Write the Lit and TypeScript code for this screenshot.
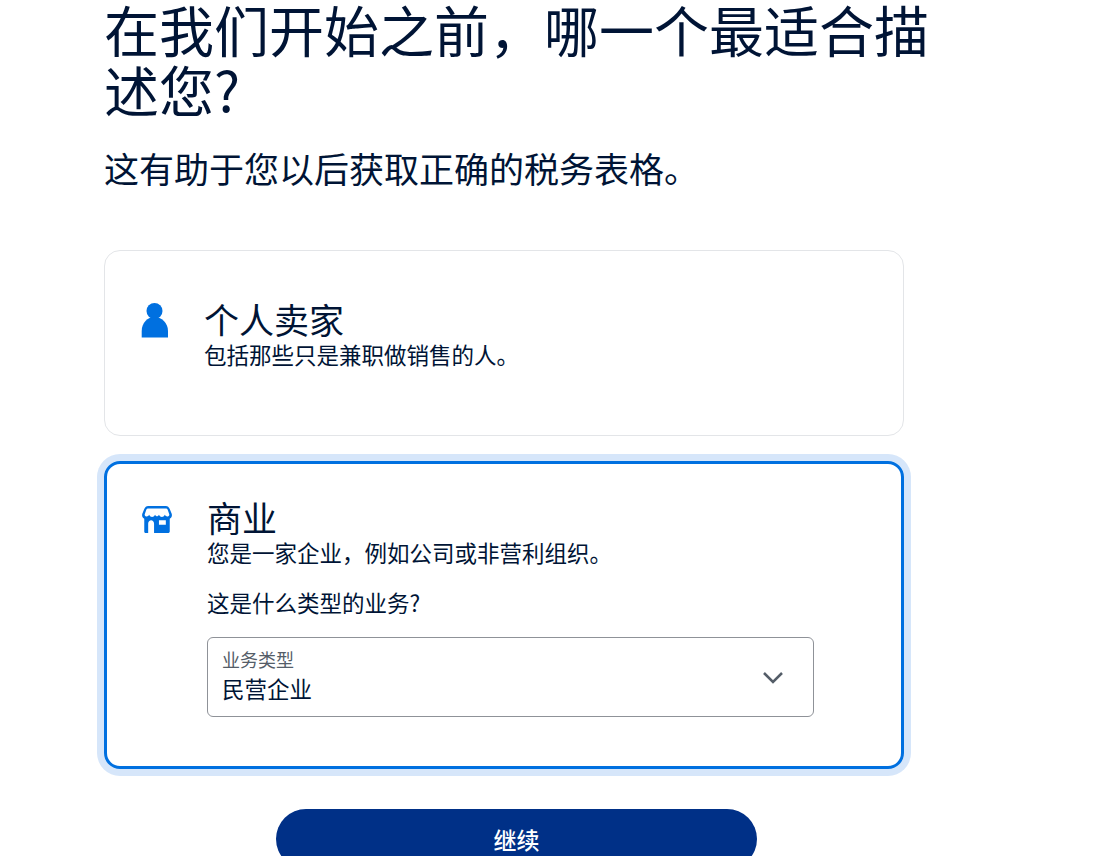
import { LitElement, html, css } from "lit";
import { customElement } from "lit/decorators.js";

@customElement("app-root")
export class AppRoot extends LitElement {
  static styles = css`
    :host {
      display: block;
      height: 856px;
      overflow: hidden;
      background: #fff;
      color: #001435;
      font-family: "Noto Sans CJK SC", "Noto Sans", sans-serif;
    }
    main {
      width: 800px;
      margin-left: 104px;
      display: flex;
      flex-direction: column;
    }
    h1 {
      width: 840px;
      margin: -2px 0 0;
      font-size: 55px;
      line-height: 60px;
      font-weight: 400;
    }
    .sub {
      margin: 26px 0 0;
      font-size: 35px;
      line-height: 48px;
    }
    .cards {
      margin-top: 58px;
      display: flex;
      flex-direction: column;
      gap: 25px;
    }
    .card {
      box-sizing: border-box;
      display: flex;
      border: 1px solid #e3e5e8;
      border-radius: 16px;
      height: 186px;
      padding: 48px 0 0 36px;
    }
    .card.selected {
      height: 308px;
      border: 3px solid #0070e0;
      box-shadow: 0 0 0 7px #d6e6fa;
      padding: 33px 0 0 35px;
    }
    .icon {
      width: 30px;
      flex: none;
      margin-right: 33px;
      padding-top: 3px;
    }
    .selected .icon {
      margin-right: 35px;
      padding-top: 9px;
    }
    .icon svg {
      display: block;
    }
    .title {
      font-size: 35px;
      line-height: 39px;
    }
    .desc {
      font-size: 22.5px;
      line-height: 32px;
    }
    .question {
      font-size: 22.5px;
      line-height: 32px;
      margin-top: 18px;
    }
    .select {
      box-sizing: border-box;
      width: 607px;
      height: 80px;
      margin-top: 19px;
      border: 1px solid #8f9298;
      border-radius: 6px;
      padding: 0 14px;
      display: flex;
      align-items: center;
      justify-content: space-between;
    }
    .select-label {
      font-size: 18px;
      line-height: 26px;
      color: #545d68;
      margin-top: -5px;
    }
    .select-value {
      font-size: 22.5px;
      line-height: 32px;
    }
    .select svg {
      margin: 1px 15px 0 0;
    }
    .actions {
      margin: 40px 0 0 172px;
    }
    button {
      display: block;
      width: 481px;
      height: 60px;
      border: 0;
      border-radius: 30px;
      background: #003087;
      color: #fff;
      font: inherit;
      font-size: 23px;
      font-weight: 500;
    }
  `;

  render() {
    return html`
      <main>
        <h1>在我们开始之前，哪一个最适合描述您?</h1>
        <p class="sub">这有助于您以后获取正确的税务表格。</p>
        <div class="cards">
          <div class="card">
            <div class="icon">
              <svg width="28" height="36" viewBox="0 0 28 36">
                <circle cx="13.500" cy="9" r="8" fill="#0070e0" />
                <path
                  d="M.7 35.500V29C.7 21 6.500 15 13.500 15S27 21 27 29V35.500Z"
                  fill="#0070e0"
                />
              </svg>
            </div>
            <div>
              <div class="title">个人卖家</div>
              <div class="desc">包括那些只是兼职做销售的人。</div>
            </div>
          </div>
          <div class="card selected">
            <div class="icon">
              <svg width="30" height="27" viewBox="0.7 2 30.6 27.5" preserveAspectRatio="none">
                <path
                  fill="#0070e0"
                  fill-rule="evenodd"
                  d="M7 2H25C27 2 28 3 29 5L31 10C31.6 12 31 14 29 15V28C29 29 28 29.500 27.500 29.500H4.500C3.500 29.500 3 29 3 28V15C1 14 .4 12 1 10L3 5C4 3 5 2 7 2ZM7.500 4.500C6 4.500 5.500 5 5 6L3.500 10.500C3 12.500 6.500 14 8 11C9.500 14 12.500 14 14 11C15 13 17 13 18 11C19.500 14 22.500 14 24 11C25.500 14 29 12.500 28.500 10.500L27 6C26.500 5 26 4.500 24.500 4.500ZM7 29.500H13V20C13 18 11.500 16.500 10 16.500S7 18 7 20ZM18 16.500V21H25V16.500Z"
                />
              </svg>
            </div>
            <div>
              <div class="title">商业</div>
              <div class="desc">您是一家企业，例如公司或非营利组织。</div>
              <div class="question">这是什么类型的业务?</div>
              <div class="select">
                <div>
                  <div class="select-label">业务类型</div>
                  <div class="select-value">民营企业</div>
                </div>
                <svg width="22" height="14" viewBox="0 0 22 14">
                  <path d="M2 2L11 11L20 2" fill="none" stroke="#545d68" stroke-width="2.500" />
                </svg>
              </div>
            </div>
          </div>
        </div>
        <div class="actions"><button>继续</button></div>
      </main>
    `;
  }
}
